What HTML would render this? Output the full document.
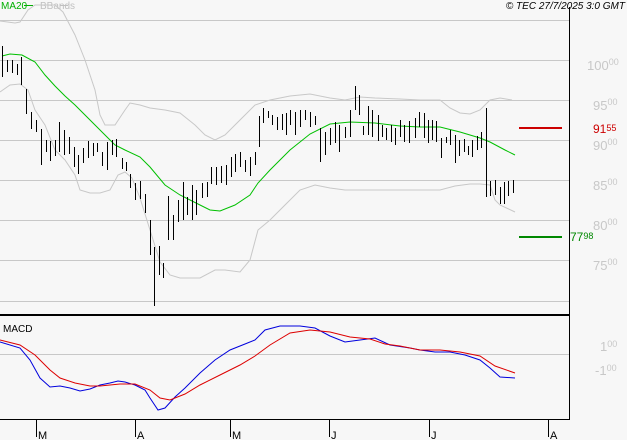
<!DOCTYPE html>
<html><head><style>
html,body{margin:0;padding:0;background:#f7f7f7;}
svg{display:block;font-family:"Liberation Sans",sans-serif;}
</style></head><body>
<svg width="627" height="440" viewBox="0 0 627 440" xmlns="http://www.w3.org/2000/svg">
<rect width="627" height="440" fill="#f7f7f7"/>
<g stroke="#c8c8c8" stroke-width="1">
<line x1="0" y1="20.5" x2="569" y2="20.5"/>
<line x1="0" y1="60.5" x2="569" y2="60.5"/>
<line x1="0" y1="100.5" x2="569" y2="100.5"/>
<line x1="0" y1="140.5" x2="569" y2="140.5"/>
<line x1="0" y1="180.5" x2="569" y2="180.5"/>
<line x1="0" y1="220.5" x2="569" y2="220.5"/>
<line x1="0" y1="260.5" x2="569" y2="260.5"/>
<line x1="0" y1="301.5" x2="569" y2="301.5"/>
<line x1="0" y1="354.5" x2="569" y2="354.5"/>
</g>
<line x1="569.5" y1="7" x2="569.5" y2="420" stroke="#000"/>
<line x1="0" y1="315" x2="569" y2="315" stroke="#000" stroke-width="2"/>
<line x1="0" y1="419.5" x2="569" y2="419.5" stroke="#000"/>
<g stroke="#000"><line x1="36.5" y1="419" x2="36.5" y2="437"/><line x1="135.5" y1="419" x2="135.5" y2="437"/><line x1="230.5" y1="419" x2="230.5" y2="437"/><line x1="329.5" y1="419" x2="329.5" y2="437"/><line x1="429.5" y1="419" x2="429.5" y2="437"/><line x1="548.5" y1="419" x2="548.5" y2="437"/></g>
<g font-size="11" fill="#000"><text x="38" y="439">M</text><text x="137" y="439">A</text><text x="232" y="439">M</text><text x="331" y="439">J</text><text x="431" y="439">J</text><text x="550" y="439">A</text></g>
<g fill="#c8c8c8" font-size="13">
<text x="587" y="70">100<tspan font-size="9" dy="-5">00</tspan></text>
<text x="593" y="110">95<tspan font-size="9" dy="-5">00</tspan></text>
<text x="593" y="150">90<tspan font-size="9" dy="-5">00</tspan></text>
<text x="593" y="190">85<tspan font-size="9" dy="-5">00</tspan></text>
<text x="593" y="230">80<tspan font-size="9" dy="-5">00</tspan></text>
<text x="593" y="270">75<tspan font-size="9" dy="-5">00</tspan></text>
<text x="600" y="351">1<tspan font-size="9" dy="-4">00</tspan></text>
<text x="595" y="375">-1<tspan font-size="9" dy="-4">00</tspan></text>
</g>
<text x="593" y="133" font-size="12" fill="#cc0000">91<tspan font-size="9" dy="-2">55</tspan></text>
<text x="570" y="241" font-size="12" fill="#008800">77<tspan font-size="9" dy="-2">98</tspan></text>
<line x1="519" y1="128" x2="562" y2="128" stroke="#cc0000" stroke-width="2"/>
<line x1="519" y1="237" x2="562" y2="237" stroke="#008800" stroke-width="2"/>
<text x="1" y="9" font-size="10" fill="#00b000">MA20</text>
<line x1="24" y1="5.5" x2="33" y2="5.5" stroke="#00b000"/>
<text x="40" y="9" font-size="10" fill="#c0c0c0">BBands</text>
<line x1="60" y1="5.5" x2="68" y2="5.5" stroke="#c0c0c0"/>
<text x="625" y="9" font-size="10" font-style="italic" fill="#000" text-anchor="end">© TEC 27/7/2025 3:0 GMT</text>
<text x="3" y="332" font-size="10" fill="#000">MACD</text>
<g fill="none" stroke="#c8c8c8" stroke-width="1">
<polyline points="0,21 15,23 20,22 28,10 35,5 55,5 63,12 75,35 85,60 95,90 100,115 105,125 115,125 125,110 130,103 140,105 150,108 165,110 180,113 195,125 205,135 215,140 225,135 240,120 255,105 270,100 290,96 310,94 330,98 345,100 360,97 375,98 400,99 420,100 440,100 450,108 460,113 470,114 480,110 490,100 500,98 512,100"/>
<polyline points="0,92 10,85 20,84 28,90 35,110 45,125 55,150 65,160 75,175 80,190 90,193 100,193 110,190 118,175 125,172 132,178 140,198 150,230 160,262 170,275 180,278 200,278 215,270 225,270 240,272 250,260 258,230 270,220 285,205 300,190 315,185 330,188 345,190 360,190 380,190 400,190 420,190 440,190 455,186 470,184 480,184 490,185 495,200 500,205 515,212"/>
</g>
<polyline fill="none" stroke="#00c000" points="2,56 10,54 22,55 35,62 45,75 55,86 65,96 75,105 90,120 105,135 115,145 125,150 140,157 150,167 165,185 180,195 200,205 210,210 220,211 235,205 250,195 258,183 270,170 290,150 310,134 330,124 350,122 375,123 400,126 420,127 440,127 460,132 480,138 490,142 505,150 515,155"/>
<path stroke="#000" stroke-width="1" shape-rendering="crispEdges" fill="none" transform="translate(0.5,0)" d="M2,46V77M7,60V72M12,60V73M17,64V75M21,57V85M26,89V114M31,112V129M36,120V132M41,129V165M46,140V152M50,141V161M55,140V156M59,122V152M64,130V155M69,137V154M74,147V167M78,155V174M83,148V163M88,141V158M93,143V156M97,143V152M102,152V166M107,142V170M112,140V155M116,139V157M122,158V169M126,162V171M130,174V188M135,183V200M140,181V199M145,194V213M150,220V255M154,247V306M159,246V275M163,263V278M168,196V240M173,215V240M178,200V222M183,182V220M187,197V215M192,185V220M196,190V215M202,183V198M207,182V197M211,167V184M216,167V185M221,166V183M226,165V185M231,157V177M235,154V172M240,152V167M245,160V172M250,157V176M255,152V165M259,116V147M263,108V123M268,111V118M272,115V125M277,117V130M282,114V130M286,113V135M290,110V125M295,112V135M300,110V127M305,110V120M310,112V127M315,116V125M320,128V162M325,132V155M330,128V145M335,122V143M339,125V152M345,127V138M350,110V137M355,86V110M359,95V115M363,126V135M368,106V135M372,110V137M378,115V141M382,125V137M386,128V140M391,125V142M395,128V145M400,120V137M404,125V142M409,121V143M415,118V138M419,112V127M424,113V138M428,120V143M432,120V140M436,121V142M441,138V158M446,137V143M450,130V145M455,135V163M459,140V156M464,139V152M468,146V155M472,140V157M477,136V150M481,132V148M486,108V197M490,181V196M495,180V195M500,187V204M504,182V204M508,181V196M513,180V193"/>
<polyline fill="none" stroke="#0000dd" points="0,342 20,348 30,360 40,378 50,387 60,386 70,388 80,391 90,389 100,385 110,383 118,381 125,382 135,385 145,390 150,398 158,410 165,408 175,397 185,388 200,373 215,360 230,350 245,344 255,340 265,330 280,326 300,326 315,328 330,336 345,342 360,340 375,338 390,345 410,348 420,350 435,352 450,352 465,355 480,360 490,368 500,377 515,378"/>
<polyline fill="none" stroke="#dd0000" points="0,340 20,345 35,355 50,370 60,378 75,383 90,386 100,386 120,384 135,384 150,390 160,398 170,400 185,394 200,385 220,375 240,365 255,356 270,345 290,333 310,330 330,332 350,337 370,339 385,344 400,346 420,350 440,350 460,352 480,356 495,366 515,373"/>
</svg>
</body></html>
